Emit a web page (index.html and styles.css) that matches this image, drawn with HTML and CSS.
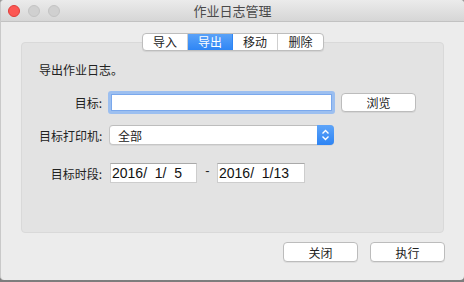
FILE: index.html
```html
<!DOCTYPE html>
<html lang="zh">
<head>
<meta charset="utf-8">
<link rel="stylesheet" href="styles.css">
</head>
<body>
<div class="window">
  <div class="titlebar">
    <div class="lights">
      <span class="light red"></span>
      <span class="light grey"></span>
      <span class="light grey"></span>
    </div>
    <div class="title">作业日志管理</div>
  </div>
  <div class="content">
    <div class="tabs">
      <span class="tab">导入</span>
      <span class="tab active">导出</span>
      <span class="tab">移动</span>
      <span class="tab last">删除</span>
    </div>
    <div class="group">
      <div class="intro">导出作业日志。</div>
      <div class="row row1">
        <span class="label">目标:</span>
        <div class="input focus"></div>
        <button class="btn browse">浏览</button>
      </div>
      <div class="row row2">
        <span class="label">目标打印机:</span>
        <div class="select">
          <span class="select-text">全部</span>
          <span class="stepper">
            <svg width="9" height="12" viewBox="0 0 9 12"><path d="M1.5 4.5 L4.5 1.5 L7.5 4.5 M1.5 7.5 L4.5 10.5 L7.5 7.5" fill="none" stroke="#fff" stroke-width="1.4"/></svg>
          </span>
        </div>
      </div>
      <div class="row row3">
        <span class="label">目标时段:</span>
        <div class="date">2016/&nbsp; 1/&nbsp; 5</div>
        <span class="dash">-</span>
        <div class="date">2016/&nbsp; 1/13</div>
      </div>
    </div>
    <div class="footer">
      <button class="btn action">关闭</button>
      <button class="btn action">执行</button>
    </div>
  </div>
</div>
</body>
</html>
```

FILE: styles.css
```css
html, body {
  margin: 0;
  padding: 0;
}
body {
  width: 464px;
  height: 282px;
  background: linear-gradient(#9a9a9a, #7d7d7d);
  font-family: "Noto Sans CJK SC", "Liberation Sans", sans-serif;
  color: #222;
  overflow: hidden;
}
.window {
  width: 464px;
  height: 280px;
  background: #ececec;
  border-radius: 4px 4px 4px 4px;
  display: flex;
  flex-direction: column;
  box-sizing: border-box;
  border-left: 1px solid #c9c9c9;
}
.titlebar {
  height: 22px;
  flex: none;
  box-sizing: border-box;
  background: linear-gradient(#ebebeb, #d6d6d6);
  border-bottom: 1px solid #c2c2c2;
  border-radius: 4px 4px 0 0;
  display: flex;
  align-items: center;
  position: relative;
}
.lights {
  display: flex;
  gap: 8px;
  padding-left: 7px;
}
.light {
  width: 12px;
  height: 12px;
  border-radius: 50%;
  box-sizing: border-box;
}
.light.red {
  background: #fc5753;
  border: 1px solid #df3d39;
}
.light.grey {
  background: #d0d0d0;
  border: 1px solid #c3c3c3;
}
.title {
  position: absolute;
  left: 0;
  right: 0;
  top: 0;
  line-height: 22px;
  text-align: center;
  font-size: 13px;
  color: #4a4a4a;
}
.content {
  flex: 1;
  display: flex;
  flex-direction: column;
  padding: 11px 19px 0 19px;
}
.tabs {
  align-self: center;
  display: flex;
  height: 18px;
  margin-left: 1px;
  margin-bottom: -9px;
  position: relative;
  z-index: 1;
  background: #fff;
  border: 1px solid #bdbdbd;
  border-radius: 4px;
  box-sizing: border-box;
  box-shadow: 0 1px 1px rgba(0,0,0,0.08);
  overflow: hidden;
}
.tab {
  width: 45px;
  text-align: center;
  font-size: 12px;
  line-height: 16px;
  color: #222;
  border-right: 1px solid #cfcfcf;
  box-sizing: border-box;
}
.tab.last {
  border-right: none;
}
.tab.active {
  background: linear-gradient(#5aa2f8, #2f86f5);
  color: #fff;
  border-right-color: #2f86f5;
}
.group {
  height: 191px;
  box-sizing: border-box;
  background: #e3e3e3;
  border: 1px solid #d9d9d9;
  border-radius: 4px;
  margin-left: 1px;
  margin-right: 1px;
  padding: 18px 0 0 17px;
}
.intro {
  font-size: 12px;
  line-height: 18px;
  color: #222;
}
.row {
  display: flex;
  align-items: center;
}
.label {
  width: 63px;
  text-align: right;
  white-space: nowrap;
  font-size: 12px;
  color: #222;
  margin-right: 6px;
  flex: none;
}
.row1 {
  margin-top: 12px;
}
.input {
  width: 227px;
  height: 23px;
  box-sizing: border-box;
  background: #fff;
  border: 3px solid #9cbff0;
  border-radius: 3px;
  box-shadow: inset 0 0 0 1px #7aa8ec;
}
.btn {
  font-family: "Noto Sans CJK SC", "Liberation Sans", sans-serif;
  font-size: 12px;
  color: #222;
  background: #fff;
  border: 1px solid #bcbcbc;
  border-radius: 4px;
  box-shadow: 0 1px 0 rgba(0,0,0,0.06);
  padding: 0;
  height: 20px;
  line-height: 17px;
}
.browse {
  width: 75px;
  margin-left: 6px;
  height: 19px;
  line-height: 16px;
}
.row2 {
  margin-top: 11px;
}
.select {
  margin-left: 1px;
  width: 225px;
  height: 20px;
  box-sizing: border-box;
  background: #fff;
  border: 1px solid #c6c6c6;
  border-top-color: #bdbdbd;
  border-radius: 4px;
  display: flex;
  align-items: center;
  justify-content: space-between;
  box-shadow: 0 1px 0 rgba(0,0,0,0.05);
}
.select-text {
  font-size: 12px;
  padding-left: 8px;
  color: #222;
}
.stepper {
  width: 17px;
  height: 20px;
  margin-right: -1px;
  background: linear-gradient(#5da4f9, #2d84f4);
  border-radius: 0 4px 4px 0;
  display: flex;
  align-items: center;
  justify-content: center;
}
.row3 {
  margin-top: 18px;
}
.date {
  margin-left: 2px;
  width: 87px;
  height: 20px;
  box-sizing: border-box;
  background: #fff;
  border: 1px solid #cdcdcd;
  border-top-color: #a9a9a9;
  font-family: "Liberation Sans", Arial, sans-serif;
  font-size: 14px;
  line-height: 19px;
  padding-left: 1px;
  color: #111;
}
.dash {
  width: 19px;
  text-align: center;
  font-family: "Liberation Sans", Arial, sans-serif;
  font-size: 13px;
  margin-top: -6px;
  margin-left: 1px;
  color: #222;
}
.row3 .date + .dash + .date {
  margin-left: 0;
  width: 88px;
}
.footer {
  display: flex;
  justify-content: flex-end;
  gap: 12px;
  margin-top: 9px;
  margin-right: 0;
}
.action {
  width: 75px;
}
```
